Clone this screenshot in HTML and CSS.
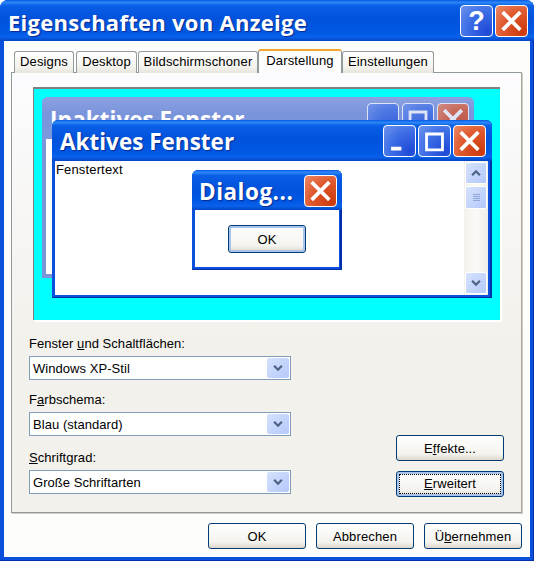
FILE: index.html
```html
<!DOCTYPE html>
<html>
	<head>
		<meta charset="utf-8">
		<title>Eigenschaften von Anzeige</title>
		<link rel="stylesheet" href="styles.css">
	</head>
	<body>
		<svg class="defs" width="0" height="0">
			<symbol id="x" viewBox="0 0 32 32"><path d="M8 8L24 24M24 8L8 24" stroke="#fff" stroke-width="4" stroke-linecap="square"/></symbol>
			<symbol id="max" viewBox="0 0 32 32"><path d="M7.5 8.5H24.5V25.5H7.5Z" fill="none" stroke="#fff" stroke-width="3"/></symbol>
			<symbol id="min" viewBox="0 0 32 32"><path d="M7 22H18V26H7Z" fill="#fff"/></symbol>
			<symbol id="down" viewBox="0 0 9 7"><path d="M1 1.5L4.5 5L8 1.5" fill="none" stroke="#4d6185" stroke-width="2"/></symbol>
			<symbol id="up" viewBox="0 0 9 7"><path d="M1 5.5L4.5 2L8 5.5" fill="none" stroke="#4d6185" stroke-width="2"/></symbol>
		</svg>
		<div class="window">
			<div class="titlebar">
				<div class="title">Eigenschaften von Anzeige</div>
				<div class="caption-btn blue help">?</div>
				<div class="caption-btn red"><svg><use href="#x"/></svg></div>
			</div>
			<div class="client">
				<div class="tabs">
					<div class="tab tab-designs">Designs</div>
					<div class="tab tab-desktop">Desktop</div>
					<div class="tab tab-schoner">Bildschirmschoner</div>
					<div class="tab active">Darstellung</div>
					<div class="tab tab-einst">Einstellungen</div>
				</div>
				<div class="panel">
					<div class="preview">
						<div class="mini inactive">
							<div class="mini-title">
								<span>Inaktives Fenster</span>
								<div class="caption-btn blue"></div>
								<div class="caption-btn blue"><svg><use href="#max"/></svg></div>
								<div class="caption-btn red"><svg><use href="#x"/></svg></div>
							</div>
							<div class="mini-body"></div>
						</div>
						<div class="mini active-win">
							<div class="mini-title">
								<span>Aktives Fenster</span>
								<div class="caption-btn blue"><svg><use href="#min"/></svg></div>
								<div class="caption-btn blue"><svg><use href="#max"/></svg></div>
								<div class="caption-btn red"><svg><use href="#x"/></svg></div>
							</div>
							<div class="mini-body">
								<div class="mini-text">Fenstertext</div>
								<div class="scrollbar">
									<div class="scroll-btn"><svg><use href="#up"/></svg></div>
									<div class="scroll-thumb"><i></i><i></i><i></i><i></i></div>
									<div class="scroll-track"></div>
									<div class="scroll-btn"><svg><use href="#down"/></svg></div>
								</div>
							</div>
						</div>
						<div class="mini dialog">
							<div class="mini-title">
								<span>Dialog...</span>
								<div class="caption-btn red"><svg><use href="#x"/></svg></div>
							</div>
							<div class="dialog-body"><div class="btn dialog-ok">OK</div></div>
						</div>
					</div>
					<div class="options">
						<div class="fields">
							<div class="field">
								<label>Fenster <u>u</u>nd Schaltflächen:</label>
								<div class="combo"><span>Windows XP-Stil</span><div class="combo-btn"><svg><use href="#down"/></svg></div></div>
							</div>
							<div class="field">
								<label>F<u>a</u>rbschema:</label>
								<div class="combo"><span>Blau (standard)</span><div class="combo-btn"><svg><use href="#down"/></svg></div></div>
							</div>
							<div class="field">
								<label><u>S</u>chriftgrad:</label>
								<div class="combo"><span>Große Schriftarten</span><div class="combo-btn"><svg><use href="#down"/></svg></div></div>
							</div>
						</div>
						<div class="side-btns">
							<div class="btn">E<u>f</u>fekte...</div>
							<div class="btn focused"><span><u>E</u>rweitert</span></div>
						</div>
					</div>
				</div>
				<div class="footer">
					<div class="btn">OK</div>
					<div class="btn">Abbrechen</div>
					<div class="btn">Ü<u>b</u>ernehmen</div>
				</div>
			</div>
		</div>
	</body>
</html>
```

FILE: styles.css
```css
* {
	box-sizing: border-box;
}
html, body {
	margin: 0;
	padding: 0;
}
body {
	width: 534px;
	height: 561px;
	overflow: hidden;
	background: #fff;
	font-family: "Liberation Sans", sans-serif;
	font-size: 13px;
	letter-spacing: 0.15px;
	color: #000;
}
.defs {
	position: absolute;
}
.window {
	width: 534px;
	height: 561px;
	display: flex;
	flex-direction: column;
	background: #0a50dc;
	border-radius: 8px 8px 0 0;
	overflow: hidden;
	box-shadow: inset -1px -1px 0 #0030a8;
}
.titlebar, .mini-title {
	background: linear-gradient(180deg, #0a5ae6 0%, #2b86f6 6%, #0a5fe6 14%, #0252dc 45%, #0058e4 80%, #0a62ec 90%, #0344c4 100%);
}
.titlebar {
	height: 41px;
	flex: none;
	display: flex;
	align-items: center;
	padding: 5px 6px 4px 8px;
	gap: 2px;
}
.title {
	flex: 1;
	padding-top: 1px;
	font-family: "Open Sans", sans-serif;
	font-weight: 700;
	font-size: 22px;
	letter-spacing: 0.28px;
	color: #fff;
	text-shadow: 1px 1px 1px #0a2a90;
}
.caption-btn {
	width: 33px;
	height: 32px;
	flex: none;
	border: 1px solid #fff;
	border-radius: 4px;
	display: flex;
	align-items: center;
	justify-content: center;
}
.caption-btn svg {
	width: 100%;
	height: 100%;
}
.caption-btn.blue {
	background: radial-gradient(circle at 85% 85%, #1f49d6 0%, #3d6ee6 55%, #6f94ee 100%);
}
.caption-btn.red {
	background: radial-gradient(circle at 85% 85%, #cc3a0e 0%, #e0592e 55%, #eb8a68 100%);
}
.help {
	font-family: "Liberation Sans", sans-serif;
	font-weight: 700;
	font-size: 27px;
	color: #fff;
}
.client {
	flex: 1;
	margin: 0 4px 4px 4px;
	padding: 8px 8px 0 7px;
	background: #fdfdfb;
	display: flex;
	flex-direction: column;
}
.tabs {
	height: 24px;
	flex: none;
	display: flex;
	align-items: flex-end;
	padding-left: 3px;
	position: relative;
	z-index: 1;
	margin-bottom: -1px;
}
.tab {
	height: 22px;
	padding-top: 2px;
	text-align: center;
	border: 1px solid #919b9c;
	border-bottom: 0;
	border-radius: 3px 3px 0 0;
	background: linear-gradient(180deg, #fff, #f4f3ee 70%, #e6e4dc);
	white-space: nowrap;
}
.tab-designs {
	width: 60px;
	margin-right: 2px;
}
.tab-desktop {
	width: 61px;
	margin-right: 1px;
}
.tab-schoner {
	width: 120px;
}
.tab.active {
	width: 84px;
	height: 24px;
	background: #fcfcfd;
	border-top: 2px solid #f0a92c;
}
.tab-einst {
	width: 92px;
}
.panel {
	height: 441px;
	flex: none;
	border: 1px solid #919b9c;
	border-right-color: #aca899;
	background: linear-gradient(180deg, #fcfcfe, #f3f1ec 60%);
	padding: 14px 17px 0 17px;
	box-shadow: 1px 1px 0 #d0cec4;
}
.preview {
	position: relative;
	height: 233px;
	margin: 0 4px 0 4px;
	background: #00ffff;
	border-top: 2px solid #808080;
	border-left: 1px solid #808080;
	box-shadow: 2px 2px 0 #fff;
}
.mini {
	position: absolute;
	display: flex;
	flex-direction: column;
	border-radius: 6px 6px 0 0;
	overflow: hidden;
}
.mini-title {
	flex: none;
	display: flex;
	align-items: center;
	gap: 2px;
	padding: 5px 6px 4px 8px;
	font-family: "Open Sans", sans-serif;
	font-weight: 700;
	font-size: 22.5px;
	letter-spacing: 0;
	color: #fff;
	text-shadow: 1px 1px 1px #0a2a90;
}
.mini-title span {
	flex: 1;
	white-space: nowrap;
}
.inactive {
	left: 8px;
	top: 8px;
	width: 432px;
	height: 181px;
	background: #7b94da;
}
.inactive .mini-title {
	height: 42px;
	gap: 3px;
	background: linear-gradient(180deg, #8ba2e0, #7a94dc 40%, #7e98de);
	text-shadow: none;
	padding: 6px 5px 4px 8px;
}
.inactive .caption-btn {
	width: 32px;
	opacity: 0.75;
}
.inactive .mini-body {
	flex: 1;
	margin: 0 4px 4px 4px;
	background: #fff;
}
.active-win {
	left: 18px;
	top: 31px;
	width: 440px;
	height: 178px;
	background: #0a50dc;
	box-shadow: inset -2px -1px 0 #0030a8;
}
.active-win .mini-title {
	height: 41px;
}
.active-win .mini-body {
	flex: 1;
	margin: 0 4px 3px 3px;
	background: #fff;
	display: flex;
}
.mini-text {
	flex: 1;
	line-height: 17px;
	padding-left: 1px;
}
.scrollbar {
	width: 24px;
	flex: none;
	display: flex;
	flex-direction: column;
	padding: 1px;
	gap: 2px;
	background: linear-gradient(90deg, #f3f1ec, #fbfaf7 50%, #f0eee8);
}
.scroll-btn {
	height: 22px;
	flex: none;
	border: 1px solid #fff;
	border-radius: 2px;
	background: linear-gradient(135deg, #d6e2fd, #b4c9fa);
	display: flex;
	align-items: center;
	justify-content: center;
}
.scroll-btn svg {
	width: 10px;
	height: 8px;
}
.scroll-thumb {
	height: 23px;
	flex: none;
	border: 1px solid #fff;
	border-radius: 2px;
	background: linear-gradient(135deg, #d6e2fd, #b4c9fa);
	display: flex;
	flex-direction: column;
	align-items: center;
	justify-content: center;
	gap: 1px;
}
.scroll-thumb i {
	width: 7px;
	height: 1px;
	background: #8ea5d8;
}
.scroll-track {
	flex: 1;
}
.dialog {
	left: 158px;
	top: 81px;
	width: 150px;
	height: 100px;
	background: #0a50dc;
	box-shadow: inset -2px -1px 0 #0030a8;
}
.dialog .mini-title {
	height: 40px;
	padding: 5px 5px 3px 7px;
	letter-spacing: 0.5px;
}
.dialog-body {
	flex: 1;
	margin: 0 3px 3px 3px;
	background: #fff;
	display: flex;
	justify-content: center;
	padding-top: 15px;
}
.btn {
	border: 1px solid #003c74;
	border-radius: 3px;
	background: linear-gradient(180deg, #fff, #f4f3ee 75%, #dcd8cc);
	display: flex;
	align-items: center;
	justify-content: center;
	white-space: pre;
}
.dialog-ok {
	width: 78px;
	height: 28px;
	box-shadow: inset 0 0 0 2px #a8c4ec;
}
.options {
	display: flex;
	justify-content: space-between;
	align-items: flex-end;
	margin-top: 15px;
	letter-spacing: 0.05px;
}
.fields {
	width: 262px;
	display: flex;
	flex-direction: column;
}
.field {
	display: flex;
	flex-direction: column;
	margin-bottom: 11px;
}
.field:last-child {
	margin-top: 2px;
}
.field label {
	height: 21px;
	line-height: 18px;
}
.combo {
	height: 24px;
	border: 1px solid #7f9db9;
	background: #fff;
	display: flex;
	align-items: center;
	padding: 0 1px 0 3px;
}
.combo span {
	flex: 1;
}
.combo-btn {
	width: 22px;
	height: 20px;
	border-radius: 2px;
	background: linear-gradient(135deg, #d6e2fd, #b4c9fa);
	display: flex;
	align-items: center;
	justify-content: center;
}
.combo-btn svg {
	width: 10px;
	height: 8px;
}
.side-btns {
	width: 108px;
	display: flex;
	flex-direction: column;
	gap: 10px;
	margin-bottom: 8px;
}
.side-btns .btn {
	height: 26px;
}
.focused {
	box-shadow: inset 0 0 0 2px #a8c4ec;
	padding: 2px;
}
.focused span {
	flex: 1;
	align-self: stretch;
	text-align: center;
	line-height: 18px;
	border: 1px dotted #000;
}
.footer {
	display: flex;
	justify-content: flex-end;
	gap: 10px;
	margin-top: 10px;
}
.footer .btn {
	width: 98px;
	height: 26px;
}
```
